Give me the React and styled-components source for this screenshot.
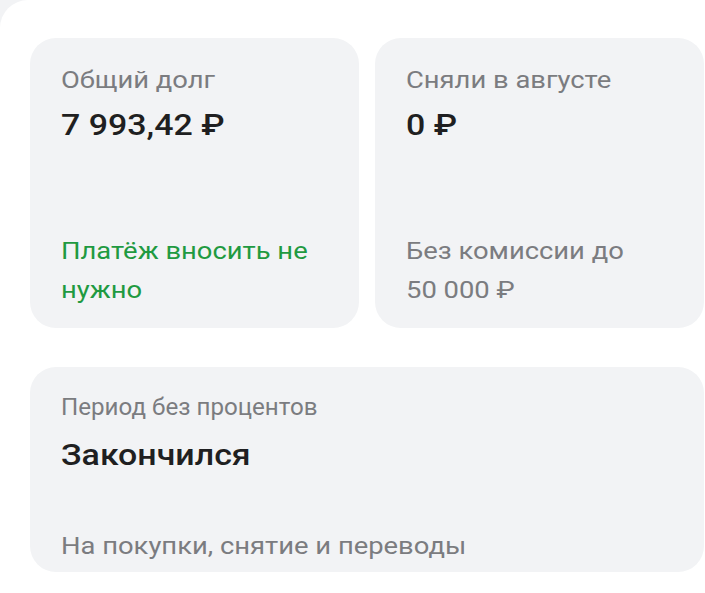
import React from "react";
import styled, { createGlobalStyle } from "styled-components";

const Global = createGlobalStyle`
  html, body {
    margin: 0;
    padding: 0;
    background: #f2f3f5;
    font-family: Roboto, "Noto Sans", sans-serif;
  }
`;

const Panel = styled.div`
  width: 705px;
  height: 593px;
  box-sizing: border-box;
  background: #ffffff;
  border-top-left-radius: 28px;
  padding: 38px 1px 0 30px;
  overflow: hidden;
`;

const Grid = styled.div`
  display: grid;
  grid-template-columns: 329px 329px;
  grid-template-rows: 290px 205px;
  column-gap: 16px;
  row-gap: 39px;
`;

const Card = styled.div`
  grid-column: ${(p) => (p.$wide ? "1 / span 2" : "auto")};
  background: #f2f3f5;
  border-radius: 26px;
  box-sizing: border-box;
  padding: ${(p) => (p.$wide ? "26px 31px 6px" : "28px 31px 18px")};
  display: flex;
  flex-direction: column;
  justify-content: space-between;
`;

/* the screenshot is stretched sideways, so text is widened to match */
const Wide = styled.span`
  display: inline-block;
  white-space: nowrap;
  transform: scaleX(${(p) => p.$k || 1.19});
  transform-origin: left center;
`;

const Label = styled.div`
  font-size: 23px;
  line-height: 30px;
  color: #7b7c80;
`;

const Value = styled.div`
  margin-top: ${(p) => (p.$wide ? 15 : 12)}px;
  font-size: 29px;
  line-height: 34px;
  font-weight: 500;
  color: #1f1f21;
`;

const Note = styled.div`
  font-size: 23px;
  line-height: 39px;
  color: ${(p) => (p.$green ? "#1f9a41" : "#7b7c80")};
`;

function StatCard({ label, value, note, green, wide, labelK }) {
  return (
    <Card $wide={wide}>
      <div>
        <Label><Wide $k={labelK}>{label}</Wide></Label>
        <Value $wide={wide}><Wide $k={1.17}>{value}</Wide></Value>
      </div>
      <Note $green={green}>
        {note.map((line) => (
          <div key={line}><Wide>{line}</Wide></div>
        ))}
      </Note>
    </Card>
  );
}

export default function App() {
  return (
    <>
      <Global />
      <Panel>
        <Grid>
          <StatCard
            label="Общий долг"
            value="7 993,42 ₽"
            note={["Платёж вносить не", "нужно"]}
            green
          />
          <StatCard
            label="Сняли в августе"
            value="0 ₽"
            note={["Без комиссии до", "50 000 ₽"]}
          />
          <StatCard
            wide
            labelK={1.05}
            label="Период без процентов"
            value="Закончился"
            note={["На покупки, снятие и переводы"]}
          />
        </Grid>
      </Panel>
    </>
  );
}
